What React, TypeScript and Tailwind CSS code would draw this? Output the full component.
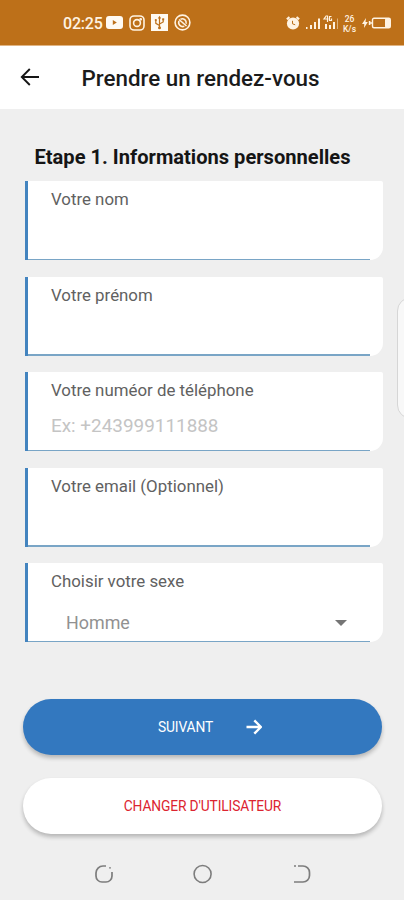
import React from 'react';

type FieldProps = {
  label: string;
  children?: React.ReactNode;
};

const fields = [
  { label: 'Votre nom' },
  { label: 'Votre prénom' },
  { label: 'Votre numéor de téléphone', placeholder: 'Ex: +243999111888' },
  { label: 'Votre email (Optionnel)' },
];

const StatusBar: React.FC = () => (
  <div className="flex h-[46px] items-center border-b border-[#e0b483] bg-[#bd7019] pl-[63px] pr-[13px] text-[#fff3e2]">
    <span className="mt-[2px] w-[43px] whitespace-nowrap text-[16px] font-medium leading-none tracking-[-0.2px]">02:25</span>
    <svg className="h-[13px] w-[17px]" viewBox="0 0 17 13">
      <rect width="17" height="13" rx="3" fill="#fffaf2" />
      <path d="M6.8 4v5l4-2.5z" fill="#bd7019" />
    </svg>
    <svg className="ml-[6px] h-4 w-4" viewBox="0 0 16 16" fill="none" stroke="currentColor" strokeWidth="1.6">
      <rect x="1" y="1" width="14" height="14" rx="4" />
      <circle cx="8" cy="8" r="3.4" />
      <circle cx="11.7" cy="4.3" r=".6" fill="currentColor" />
    </svg>
    <svg className="ml-[6px] h-[17px] w-[17px]" viewBox="0 0 17 17">
      <rect width="17" height="17" fill="#fffaf2" />
      <path d="M8.5 14V3.5M8.5 11.5 4.8 9.3V6M8.5 10l3.7-2V5" fill="none" stroke="#bd7019" strokeWidth="1.2" />
      <path d="M6.8 4.5 8.5 1.8l1.7 2.7z" fill="#bd7019" />
      <circle cx="8.5" cy="13.7" r="1.5" fill="#bd7019" />
      <circle cx="4.8" cy="6" r="1.1" fill="#bd7019" />
      <rect x="11.2" y="4.3" width="2" height="2" fill="#bd7019" />
    </svg>
    <svg className="ml-[6px] h-[17px] w-[17px]" viewBox="0 0 17 17" fill="none" stroke="currentColor" strokeWidth="1.6">
      <circle cx="8.5" cy="8.5" r="7.4" />
      <path d="m5 5.5 7.5 6.5" />
      <path d="M5 7a4 4 0 0 0 5.3 5.2M6.5 5.2a4 4 0 0 1 5.6 4.6" />
    </svg>

    <svg className="ml-auto h-[14px] w-[14px]" viewBox="0 0 14 14">
      <circle cx="7" cy="7.5" r="6.1" fill="currentColor" />
      <path d="m.8 3.2 2.7-2.1M13.2 3.2l-2.7-2.1" stroke="currentColor" strokeWidth="2" />
      <path d="M6.5 4.8v3l2.7 1" fill="none" stroke="#bd7019" strokeWidth="1" />
    </svg>
    <svg className="ml-[5px] h-4 w-[34px]" viewBox="0 0 34 16" fill="currentColor">
      <path d="M1 12h1.5v2H1zM5 10h2v4H5zM9 7h2v7H9zM13 3.5h2V14h-2z" />
      <path d="M20 9h2v5h-2zM24 10h2v4h-2zM28 7h2v7h-2z" />
      <path d="M32 3.5h1V14h-1z" opacity=".5" />
      <path d="M21.5.5 19 4h4.5M22.5.5V7M26.5 1.5h-2v4h2v-2" fill="none" stroke="currentColor" strokeWidth="1.2" />
    </svg>
    <div className="ml-[3px] mt-[2px] flex w-[15px] flex-col items-center text-[8.5px] font-medium leading-[10px]">
      <span>26</span>
      <span>K/s</span>
    </div>
    <svg className="ml-[5px] h-3 w-[29px]" viewBox="0 0 29 12">
      <path d="M4 1 0 7h2.3L2 11l3.8-6H3.5z" fill="currentColor" />
      <path d="M7 6h3M7.6 4v4" stroke="currentColor" strokeWidth="1.6" />
      <rect x="10.5" y="1.2" width="17.8" height="9.6" rx="1.5" fill="none" stroke="currentColor" strokeWidth="1.4" />
      <rect x="23" y="1.5" width="5" height="9" rx="1" fill="currentColor" />
    </svg>
  </div>
);

const Field: React.FC<FieldProps> = ({ label, children }) => (
  <div className="flex h-[79px] flex-col rounded-br-[13px] rounded-tr-[2px] border-l-[3px] border-[#4384bf] bg-white">
    <label className="ml-[23px] mt-[8px] whitespace-nowrap text-[16.85px] leading-5 text-[#616161]">{label}</label>
    {children}
    <div className="mr-[13px] mt-auto h-[1.5px] bg-[#79a5c6]" />
  </div>
);

const App: React.FC = () => {
  return (
    <div className="relative flex h-[900px] w-[404px] flex-col overflow-hidden bg-[#efefef] font-['Roboto',sans-serif]">
      <StatusBar />

      <header className="flex h-[63px] items-center bg-white pl-[20px]">
        <svg className="mb-[1px] h-5 w-5" viewBox="0 0 20 20" fill="none" stroke="#161616" strokeWidth="1.9">
          <path d="M19 10H2M9.8 2 1.8 10l8 8" />
        </svg>
        <h1 className="ml-[41.5px] mt-[2px] whitespace-nowrap text-[22.4px] font-medium text-[#1b1b1b]">Prendre un rendez-vous</h1>
      </header>

      <main className="flex flex-col pl-[25px] pr-[21px]">
        <h2 className="ml-[9.5px] mt-[36px] whitespace-nowrap text-[20.1px] font-bold leading-6 text-[#151515]">
          Etape 1. Informations personnelles
        </h2>

        <div className="mt-[12px] flex flex-col gap-[16.5px]">
          {fields.map((field) => (
            <Field key={field.label} label={field.label}>
              {field.placeholder && (
                <span className="ml-[23px] mt-[14px] whitespace-nowrap text-[18.9px] leading-6 text-[#c4c4c4]">{field.placeholder}</span>
              )}
            </Field>
          ))}
          <Field label="Choisir votre sexe">
            <div className="ml-[38px] mr-[36px] mt-[20px] flex items-center justify-between">
              <span className="text-[17.9px] leading-6 text-[#919191]">Homme</span>
              <svg className="mb-[1px] h-[6px] w-[12px]" viewBox="0 0 12 6">
                <path d="M0 0h12L6 6z" fill="#757575" />
              </svg>
            </div>
          </Field>
        </div>
      </main>

      <div className="mt-[56.5px] flex flex-col gap-[23px] pl-[23px] pr-[22px]">
        <button className="flex h-[56px] items-center rounded-full bg-[#3378bf] pl-[135px] text-[13.8px] tracking-[-0.14px] text-white shadow-[0_3px_4px_rgba(0,0,0,0.24)]">
          <span className="mt-[2px] w-[88px] text-left">SUIVANT</span>
          <svg className="h-4 w-4" viewBox="0 0 16 16" fill="none" stroke="currentColor" strokeWidth="2.4">
            <path d="M.5 8h14M8.3 1.4 14.9 8l-6.6 6.6" />
          </svg>
        </button>
        <button className="h-[56px] rounded-full bg-white pt-[2px] text-[13.8px] tracking-[-0.14px] text-[#dc2430] shadow-[0_3px_4px_rgba(0,0,0,0.24)]">
          CHANGER D'UTILISATEUR
        </button>
      </div>

      <nav className="mt-auto flex h-[53px] items-center justify-between pl-[94px] pr-[92px] text-[#7d7d7d]">
        <svg className="h-5 w-5" viewBox="0 0 20 20" fill="none" stroke="currentColor" strokeWidth="1.7">
          <path d="M12 2H9a7 7 0 0 0-7 7v3a6 6 0 0 0 6 6h4a6 6 0 0 0 6-6V8" />
          <circle cx="16" cy="3.8" r=".9" fill="currentColor" stroke="none" />
        </svg>
        <svg className="h-5 w-5" viewBox="0 0 20 20" fill="none" stroke="currentColor" strokeWidth="1.6">
          <circle cx="9.6" cy="10" r="8.5" />
        </svg>
        <svg className="h-5 w-5" viewBox="0 0 20 20" fill="none" stroke="currentColor" strokeWidth="1.7">
          <path d="M6 2h5a6.5 6.5 0 0 1 6.5 6.5v3A6.5 6.5 0 0 1 11 18H2" />
          <path d="M2 2h2" />
        </svg>
      </nav>

      {/* edge panel handle */}
      <div className="absolute left-[397px] top-[297px] h-[122px] w-[30px] rounded-[14px] border border-[#d6d6d6] bg-[#f8f8f8]" />
    </div>
  );
};

export default App;
